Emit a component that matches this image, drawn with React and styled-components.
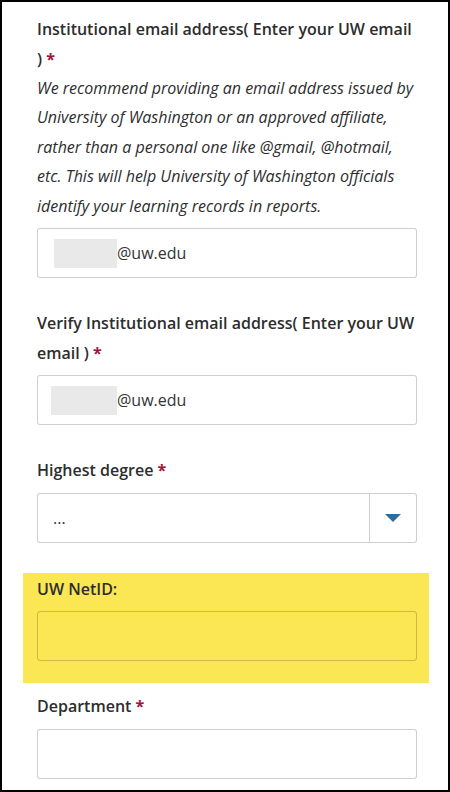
import React from 'react';
import styled, { createGlobalStyle } from 'styled-components';

const GlobalStyle = createGlobalStyle`
  html, body {
    margin: 0;
    padding: 0;
    background: #fff;
  }
  body {
    font-family: 'Open Sans', 'Liberation Sans', sans-serif;
    color: #2d2d2d;
  }
`;

const Frame = styled.div`
  box-sizing: border-box;
  width: 450px;
  height: 792px;
  border: 2px solid #000;
  padding: 13px 31px 0 35px;
  overflow: hidden;
  background: #fff;
`;

const Field = styled.div`
  margin-bottom: ${(p) => (p.$last ? '0' : '31px')};
`;

const Highlight = styled.div`
  background: #fbe654;
  margin: -1px -12px 9px -14px;
  padding: 2px 12px 22px 14px;
`;

const Label = styled.label`
  display: block;
  font-size: 16px;
  font-weight: 600;
  line-height: 29.5px;
  color: #2d2d2d;
  margin-bottom: ${(p) => (p.$withHelp ? '0' : '7px')};
`;

const Required = styled.span`
  color: #9e1537;
  font-weight: 700;
`;

const Help = styled.p`
  margin: 0 0 7px;
  font-size: 16px;
  font-style: italic;
  line-height: 29.4px;
  color: #2d2d2d;
`;

const Input = styled.div`
  box-sizing: border-box;
  height: 50px;
  display: flex;
  align-items: center;
  padding: 0 15px;
  border: 1px solid rgba(0, 0, 0, 0.19);
  border-radius: 3px;
  background: ${(p) => (p.$clear ? 'transparent' : '#fff')};
  font-size: 16px;
  color: #333;
`;

const Redacted = styled.span`
  display: inline-block;
  width: ${(p) => p.$w}px;
  height: 29px;
  margin-left: ${(p) => p.$shift}px;
  background: #e9e9e9;
`;

const Select = styled.div`
  box-sizing: border-box;
  height: 50px;
  display: flex;
  border: 1px solid rgba(0, 0, 0, 0.19);
  border-radius: 3px;
  background: #fff;
  font-size: 16px;
  color: #333;
`;

const SelectValue = styled.div`
  flex: 1;
  display: flex;
  align-items: center;
  padding: 0 15px;
`;

const SelectButton = styled.div`
  width: 46px;
  display: flex;
  align-items: center;
  justify-content: center;
  border-left: 1px solid rgba(0, 0, 0, 0.19);
`;

const Caret = () => (
  <svg width="16" height="8" viewBox="0 0 16 8">
    <polygon points="0,0 16,0 8,8" fill="#2a6da3" />
  </svg>
);

export default function App() {
  return (
    <>
      <GlobalStyle />
      <Frame>
        <Field>
          <Label $withHelp>
            Institutional email address( Enter your UW email ) <Required>*</Required>
          </Label>
          <Help>
            We recommend providing an email address issued by University of Washington or an
            approved affiliate, rather than a personal one like @gmail, @hotmail, etc. This will
            help University of Washington officials identify your learning records in reports.
          </Help>
          <Input>
            <Redacted $w={63} $shift={1} />
            @uw.edu
          </Input>
        </Field>

        <Field>
          <Label>
            Verify Institutional email address( Enter your UW email ) <Required>*</Required>
          </Label>
          <Input>
            <Redacted $w={66} $shift={-2} />
            @uw.edu
          </Input>
        </Field>

        <Field>
          <Label>
            Highest degree <Required>*</Required>
          </Label>
          <Select>
            <SelectValue>...</SelectValue>
            <SelectButton>
              <Caret />
            </SelectButton>
          </Select>
        </Field>

        <Highlight>
          <Label>UW NetID:</Label>
          <Input $clear />
        </Highlight>

        <Field $last>
          <Label>
            Department <Required>*</Required>
          </Label>
          <Input />
        </Field>
      </Frame>
    </>
  );
}
